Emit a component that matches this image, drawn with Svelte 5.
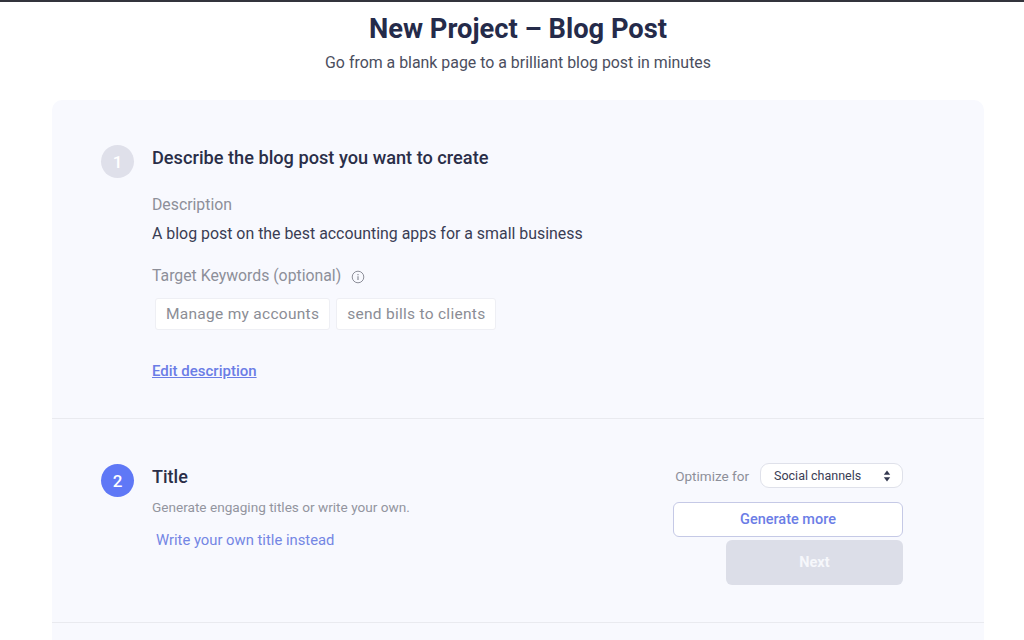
<script lang="ts">
	const keywords = ['Manage my accounts', 'send bills to clients'];
</script>

<div class="page">
	<header class="head">
		<h1>New Project – Blog Post</h1>
		<p>Go from a blank page to a brilliant blog post in minutes</p>
	</header>

	<main class="card">
		<section class="step first">
			<div class="num done">1</div>
			<div class="body">
				<h2>Describe the blog post you want to create</h2>
				<div class="label">Description</div>
				<div class="value">A blog post on the best accounting apps for a small business</div>
				<div class="label kw">
					Target Keywords (optional)
					<svg class="info" viewBox="0 0 14 14" width="14" height="14" fill="none" stroke="currentColor">
						<circle cx="7" cy="7" r="5.8" stroke-width="1" />
						<path d="M7 6.3v3.6" stroke-width="1.2" />
						<path d="M7 4v1.2" stroke-width="1.2" />
					</svg>
				</div>
				<div class="tags">
					{#each keywords as k}
						<span class="tag">{k}</span>
					{/each}
				</div>
				<a class="edit" href="#edit">Edit description</a>
			</div>
		</section>

		<section class="step second">
			<div class="num active">2</div>
			<div class="body grow">
				<h2 class="title">Title</h2>
				<div class="hint">Generate engaging titles or write your own.</div>
				<a class="own" href="#own">Write your own title instead</a>
			</div>
			<div class="actions">
				<div class="optimize">
					<span>Optimize for</span>
					<div class="select">
						Social channels
						<svg viewBox="0 0 8 12" width="8" height="12" fill="#33384f">
							<path d="M4 0.5 7.2 4.8H0.8Z" />
							<path d="M4 11.5 0.8 7.2H7.2Z" />
						</svg>
					</div>
				</div>
				<button class="more">Generate more</button>
				<button class="next">Next</button>
			</div>
		</section>

		<div class="rest"></div>
	</main>
</div>

<style>
	:global(body) {
		margin: 0;
		background: #fff;
	}

	.page {
		height: 640px;
		overflow: hidden;
		border-top: 2px solid #33343c;
		box-sizing: border-box;
		font-family: Roboto, 'Liberation Sans', sans-serif;
	}

	.head {
		text-align: center;
		padding: 11px 0 0 12px;
		height: 98px;
		box-sizing: border-box;
	}

	h1 {
		margin: 0;
		font-size: 27.3px;
		line-height: 32px;
		font-weight: 700;
		color: #252b4a;
	}

	.head p {
		margin: 8px 0 0;
		font-size: 15.9px;
		line-height: 20px;
		color: #4b4e5e;
	}

	.card {
		margin: 0 40px 0 52px;
		background: #f8f9fe;
		border-radius: 10px 10px 0 0;
	}

	.step {
		display: flex;
		padding: 0 81px 0 49px;
		border-bottom: 1px solid #e9eaef;
	}

	.first {
		height: 319px;
		padding-top: 45px;
		box-sizing: border-box;
	}

	.second {
		height: 204px;
		padding-top: 45px;
		box-sizing: border-box;
	}

	.num {
		flex: none;
		width: 33px;
		height: 33px;
		border-radius: 50%;
		color: #fff;
		font-size: 17px;
		font-weight: 500;
		display: flex;
		align-items: center;
		justify-content: center;
		margin-right: 18px;
	}

	.done {
		background: #dfe0ea;
	}

	.active {
		background: #5f78f6;
	}

	.grow {
		flex: 1;
	}

	h2 {
		margin: 0;
		font-size: 18.2px;
		line-height: 26px;
		font-weight: 500;
		color: #2a2e48;
	}

	.label {
		margin-top: 23px;
		font-size: 15.8px;
		line-height: 22px;
		color: #8d8f99;
	}

	.value {
		margin-top: 7px;
		font-size: 15.9px;
		line-height: 22px;
		color: #3a3d54;
	}

	.kw {
		margin-top: 20px;
		display: flex;
		align-items: center;
		gap: 10px;
	}

	.info {
		color: #8d8f99;
		margin-top: 2px;
	}

	.tags {
		display: flex;
		gap: 6px;
		margin: 11px 0 0 3px;
	}

	.tag {
		background: #fff;
		border: 1px solid #eeeff4;
		border-radius: 3px;
		padding: 0 10px;
		height: 30px;
		line-height: 30px;
		font-size: 15.5px;
		letter-spacing: 0.28px;
		color: #8b8d95;
	}

	.edit {
		display: inline-block;
		margin-top: 31px;
		font-size: 15px;
		line-height: 20px;
		font-weight: 500;
		color: #6b7de6;
	}

	.title {
		font-size: 18px;
		line-height: 26px;
	}

	.hint {
		margin-top: 8px;
		font-size: 13.6px;
		line-height: 18px;
		color: #93959f;
	}

	.own {
		display: block;
		margin: 14px 0 0 4px;
		font-size: 14.8px;
		line-height: 20px;
		color: #7486e4;
		text-decoration: none;
	}

	.actions {
		flex: none;
		width: 230px;
		margin-top: -1px;
		display: flex;
		flex-direction: column;
		align-items: flex-end;
	}

	.optimize {
		display: flex;
		align-items: center;
		gap: 11px;
		font-size: 13.5px;
		color: #8d8f99;
	}

	.select {
		width: 143px;
		height: 25px;
		box-sizing: border-box;
		background: #fff;
		border: 1px solid #dfe1ea;
		border-radius: 9px;
		padding: 0 11px 0 13px;
		display: flex;
		align-items: center;
		justify-content: space-between;
		font-size: 12.5px;
		color: #3a3d54;
	}

	button {
		font-family: inherit;
		cursor: pointer;
	}

	.more {
		margin-top: 14px;
		width: 230px;
		height: 35px;
		background: #fff;
		border: 1.5px solid #c5c9e6;
		border-radius: 6px;
		font-size: 14.5px;
		font-weight: 500;
		color: #6b7de6;
	}

	.next {
		margin-top: 3px;
		width: 177px;
		height: 45px;
		background: #dcdee8;
		border: 0;
		border-radius: 6px;
		font-size: 14.5px;
		font-weight: 700;
		color: #f6f7fb;
	}

	.rest {
		height: 40px;
	}
</style>
